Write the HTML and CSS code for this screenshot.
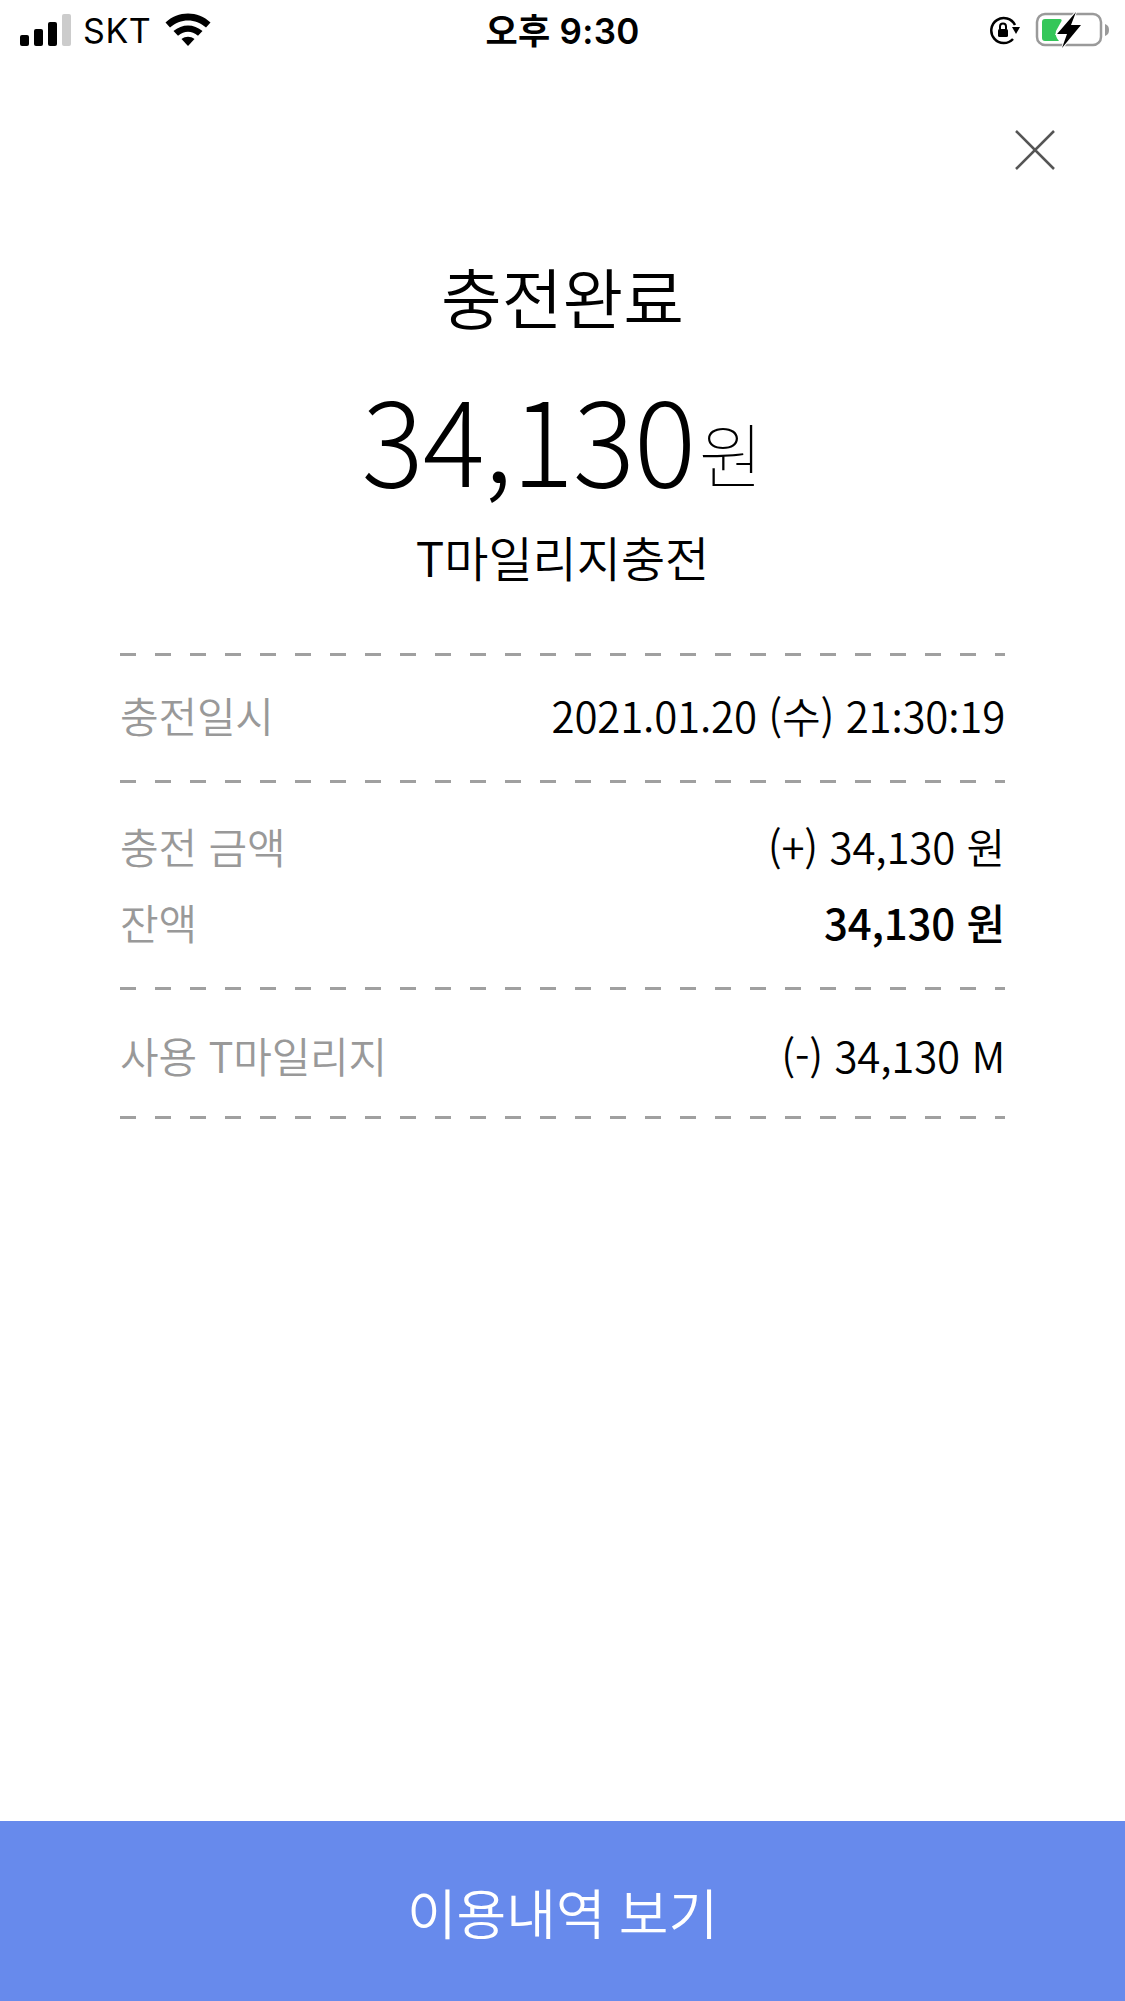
FILE: index.html
```html
<!DOCTYPE html>
<html lang="ko">
<head>
    <meta charset="UTF-8">
    <meta name="viewport" content="width=device-width, initial-scale=1.0">
    <title>충전완료</title>
    <link rel="stylesheet" href="styles.css">
</head>
<body>
    <div class="page">
        <!-- Status bar -->
        <div class="status">
            <div class="status-left">
                <div class="signal">
                    <span class="bar b1"></span>
                    <span class="bar b2"></span>
                    <span class="bar b3"></span>
                    <span class="bar b4"></span>
                </div>
                <span class="carrier">SKT</span>
                <svg class="wifi" width="46" height="34" viewBox="0 0 46 34">
                    <path d="M0.500 9.500C13 -2.500 33 -2.500 45.500 9.500L41 14.500C30.500 5 15.500 5 5 14.500Z"/>
                    <path d="M8.500 18C17 10.500 29 10.500 37.500 18L33 22.800C26.500 17.500 19.500 17.500 13 22.800Z"/>
                    <path d="M16.500 26C20.500 23 25.500 23 29.500 26L23 33Z"/>
                </svg>
            </div>
            <div class="clock">오후 9:30</div>
            <div class="status-right">
                <svg class="rotlock" width="32" height="30" viewBox="0 0 32 30">
                    <path d="M24 23A12.500 12.500 0 1 1 26 9" fill="none" stroke="#000" stroke-width="2.500"/>
                    <path d="M23 11H31L27 18Z"/>
                    <rect x="9" y="13" width="10" height="8" rx="1.500"/>
                    <path d="M11 13V10.500A3 3 0 0 1 17 10.500V13" fill="none" stroke="#000" stroke-width="2"/>
                </svg>
                <svg class="battery" width="74" height="40" viewBox="0 0 74 40">
                    <rect x="2" y="4" width="64" height="31" rx="8" fill="none" stroke="#9a9a9a" stroke-width="2.500"/>
                    <path d="M7 12A3 3 0 0 1 10 9H25C27 9 27 11 26 12L21 21C20 24 21 28 24 31H10A3 3 0 0 1 7 28Z" fill="#34c759"/>
                    <path d="M70 14C73 15 74 17 74 20C74 23 73 25 70 26Z" fill="#9a9a9a"/>
                    <path d="M41 2L22 24H32L27 38L46 15H36Z" stroke="#fff" stroke-width="2" paint-order="stroke"/>
                </svg>
            </div>
        </div>

        <!-- Close -->
        <div class="close-row">
            <svg class="close" width="40" height="40" viewBox="0 0 40 40">
                <path d="M1 1L39 39M39 1L1 39" fill="none" stroke="#555" stroke-width="2.500"/>
            </svg>
        </div>

        <!-- Summary -->
        <h1 class="title">충전완료</h1>
        <div class="amount"><span class="num">34,130</span><span class="won">원</span></div>
        <div class="sub">T마일리지충전</div>

        <!-- Detail rows -->
        <div class="details">
            <div class="dash"></div>
            <div class="group g-date">
                <div class="row"><span class="key">충전일시</span><span class="val">2021.01.20 (수) 21<span class="colon">:</span>30<span class="colon">:</span>19</span></div>
            </div>
            <div class="dash"></div>
            <div class="group g-money">
                <div class="row"><span class="key">충전 금액</span><span class="val">(+) 34,130 원</span></div>
                <div class="row"><span class="key">잔액</span><span class="val strong">34,130 원</span></div>
            </div>
            <div class="dash"></div>
            <div class="group g-used">
                <div class="row"><span class="key">사용 T마일리지</span><span class="val">(-) 34,130 M</span></div>
            </div>
            <div class="dash"></div>
        </div>

        <button class="history">이용내역 보기</button>
    </div>
</body>
</html>
```

FILE: styles.css
```css
body {
    margin: 0;
    background-color: #fff;
    font-family: "Noto Sans CJK KR", "Noto Sans", sans-serif;
    color: #000;
}
.page {
    height: 2001px;
    display: flex;
    flex-direction: column;
    overflow: hidden;
}

/* status bar */
.status {
    height: 60px;
    padding: 0 16px 0 20px;
    display: flex;
    align-items: center;
    justify-content: space-between;
    position: relative;
}
.status-left, .status-right {
    display: flex;
    align-items: center;
}
.signal {
    display: flex;
    align-items: flex-end;
    gap: 5px;
    height: 32px;
}
.bar {
    width: 9px;
    background-color: #000;
    border-radius: 2px;
}
.b1 { height: 11px; }
.b2 { height: 17px; }
.b3 { height: 24px; }
.b4 { height: 32px; background-color: #ccc; }
.carrier {
    margin: 2px 0 0 12px;
    font-family: Inter, sans-serif;
    font-size: 34px;
    line-height: 40px;
    letter-spacing: 0.6px;
}
.wifi {
    margin-left: 14px;
}
.clock {
    position: absolute;
    left: 0;
    right: 0;
    top: 1px;
    text-align: center;
    font-family: Inter, "Noto Sans CJK KR", sans-serif;
    font-size: 35px;
    font-weight: 600;
    line-height: 60px;
    letter-spacing: 0.3px;
}
.rotlock {
    margin: 2px 14px 0 0;
}

/* close */
.close-row {
    display: flex;
    justify-content: flex-end;
    padding: 70px 70px 0 0;
}

/* summary */
.title {
    margin: 85px 0 0;
    text-align: center;
    font-size: 66px;
    font-weight: 350;
    line-height: 80px;
}
.amount {
    margin-top: 31px;
    text-align: center;
    line-height: 140px;
}
.num {
    font-size: 116px;
    font-weight: 300;
    letter-spacing: -1px;
}
.won {
    font-size: 70px;
    font-weight: 100;
    line-height: 1;
    margin-left: 4px;
    vertical-align: 4px;
}
.sub {
    margin-top: -29px;
    text-align: center;
    font-size: 48px;
    font-weight: 350;
    line-height: 70px;
}

/* details */
.details {
    margin: 62px 120px 0;
}
.dash {
    height: 3px;
    background-image: repeating-linear-gradient(to right, #a0a0a0 0, #a0a0a0 16px, transparent 16px, transparent 35px);
}
.group {
    display: flex;
    flex-direction: column;
    justify-content: center;
    box-sizing: border-box;
}
.g-date { height: 124px; padding-bottom: 4px; }
.g-money { height: 204px; gap: 18px; padding-bottom: 3px; }
.g-used { height: 126px; padding-top: 3px; }
.row {
    display: flex;
    justify-content: space-between;
    line-height: 58px;
    font-size: 42px;
}
.key {
    color: #999;
    font-weight: 350;
    letter-spacing: -0.2px;
}
.val {
    letter-spacing: -0.2px;
    font-weight: 350;
}
/* CJK font draws the colon high between digits */
.colon {
    font-family: "Noto Sans", sans-serif;
    font-weight: 400;
}
.strong {
    font-weight: 500;
}

/* bottom button */
.history {
    margin-top: auto;
    height: 180px;
    width: 100%;
    border: none;
    background-color: #678aec;
    color: #fff;
    font-family: inherit;
    font-size: 54px;
    font-weight: 350;
    word-spacing: -2px;
}
```
